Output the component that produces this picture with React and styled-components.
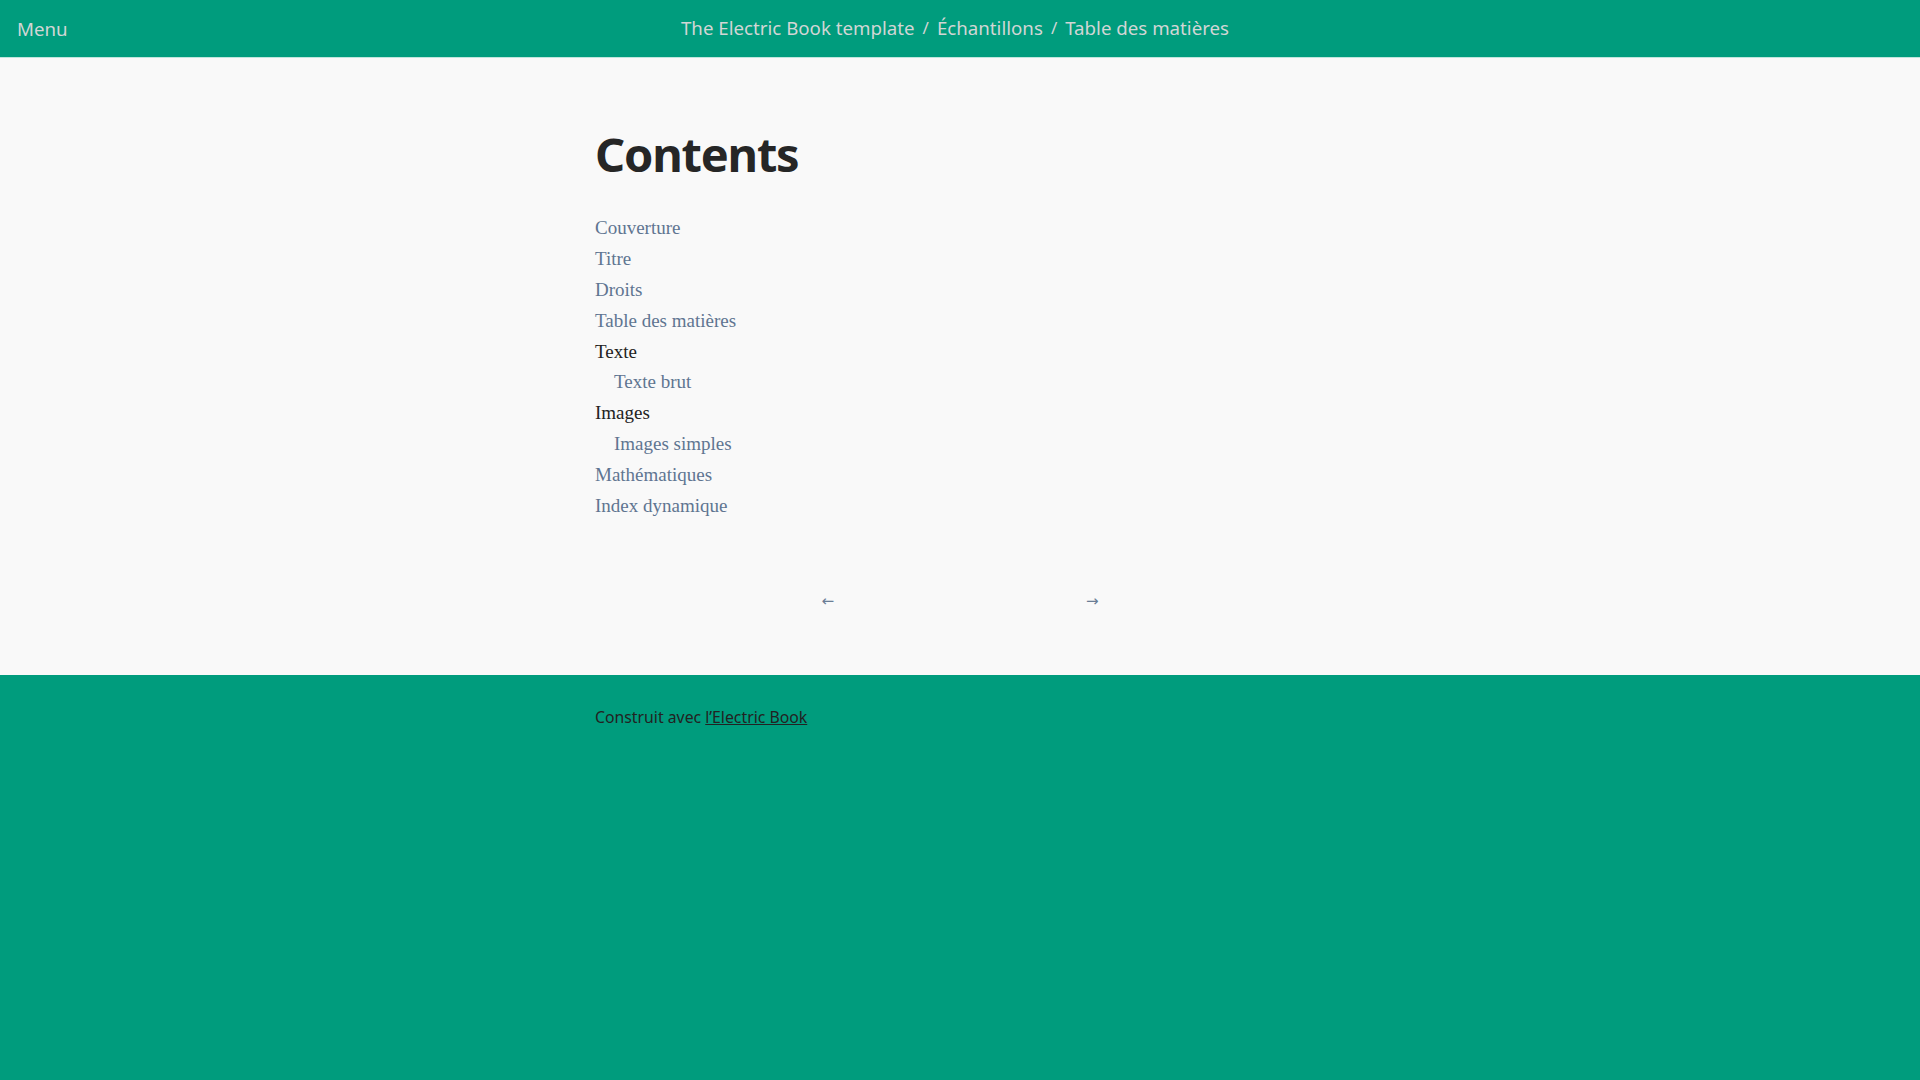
import React from "react";
import styled, { createGlobalStyle } from "styled-components";

const GlobalStyle = createGlobalStyle`
  html, body {
    margin: 0;
    padding: 0;
    background: #009c7d;
  }
  #root {
    min-height: 100vh;
    display: flex;
    flex-direction: column;
  }
`;

const items = [
  { label: "Couverture" },
  { label: "Titre" },
  { label: "Droits" },
  { label: "Table des matières" },
  { label: "Texte", heading: true },
  { label: "Texte brut", sub: true },
  { label: "Images", heading: true },
  { label: "Images simples", sub: true },
  { label: "Mathématiques" },
  { label: "Index dynamique" },
];

function App() {
  return (
    <>
      <GlobalStyle />
      <Header>
        <MenuButton>Menu</MenuButton>
        <Breadcrumbs>
          <Crumb href="#">The Electric Book template</Crumb>
          <Sep>/</Sep>
          <Crumb href="#">Échantillons</Crumb>
          <Sep>/</Sep>
          <Crumb href="#">Table des matières</Crumb>
        </Breadcrumbs>
      </Header>
      <Main>
        <Column>
          <Title>Contents</Title>
          <TocList>
            {items.map((item) => (
              <TocItem key={item.label} $sub={item.sub}>
                {item.heading ? item.label : <a href="#">{item.label}</a>}
              </TocItem>
            ))}
          </TocList>
        </Column>
        <Pager>
          <PagerLink href="#">←</PagerLink>
          <PagerLink href="#">→</PagerLink>
        </Pager>
      </Main>
      <Footer>
        <Column>
          <FooterText>
            Construit avec <a href="#">l’Electric Book</a>
          </FooterText>
        </Column>
      </Footer>
    </>
  );
}

export default App;

const Header = styled.header`
  position: relative;
  height: 57px;
  background: #009c7d;
  border-bottom: 1px solid #bfe6dd;
  display: flex;
  align-items: center;
  justify-content: center;
  font-family: "Noto Sans", "Open Sans", sans-serif;
  color: #d2d6d5;
`;

const MenuButton = styled.div`
  position: absolute;
  left: 17px;
  top: 0;
  height: 57px;
  display: flex;
  align-items: center;
  font-size: 18.7px;
  padding-bottom: 1px;
  box-sizing: border-box;
`;

const Breadcrumbs = styled.nav`
  display: flex;
  align-items: center;
  gap: 8px;
  font-size: 18.7px;
  margin-left: -10px;
  padding-bottom: 2px;
`;

const Crumb = styled.a`
  color: #d2d6d5;
  text-decoration: none;
`;

const Sep = styled.span`
  color: #d2d6d5;
  font-size: 17px;
`;

const Main = styled.main`
  background: #f9f9f9;
  padding: 68px 0 65px;
  display: flex;
  flex-direction: column;
  align-items: center;
`;

const Column = styled.div`
  width: 730px;
  margin: 0 auto;
`;

const Title = styled.h1`
  margin: 0 0 31px;
  font-family: "Noto Sans", "Open Sans", sans-serif;
  font-weight: 700;
  font-size: 47px;
  line-height: 1.2;
  letter-spacing: -1.2px;
  color: #262626;
`;

const TocList = styled.ul`
  list-style: none;
  margin: 0;
  padding: 0;
  font-family: "Liberation Serif", "Times New Roman", serif;
  font-size: 19px;
  line-height: 30.8px;
`;

const TocItem = styled.li`
  padding-left: ${(p) => (p.$sub ? "19px" : "0")};
  color: #222;

  a {
    color: #5f7591;
    text-decoration: none;
  }
`;

const Pager = styled.nav`
  margin-top: 71px;
  width: 277px;
  display: flex;
  justify-content: space-between;
`;

const PagerLink = styled.a`
  font-family: "DejaVu Sans", sans-serif;
  font-size: 15px;
  color: #6a7d95;
  text-decoration: none;
`;

const Footer = styled.footer`
  flex: 1;
  background: #009c7d;
  padding-top: 31px;
`;

const FooterText = styled.p`
  margin: 0;
  font-family: "Noto Sans", "Open Sans", sans-serif;
  font-size: 15.8px;
  color: #222;

  a {
    color: #222;
    text-decoration: underline;
  }
`;
